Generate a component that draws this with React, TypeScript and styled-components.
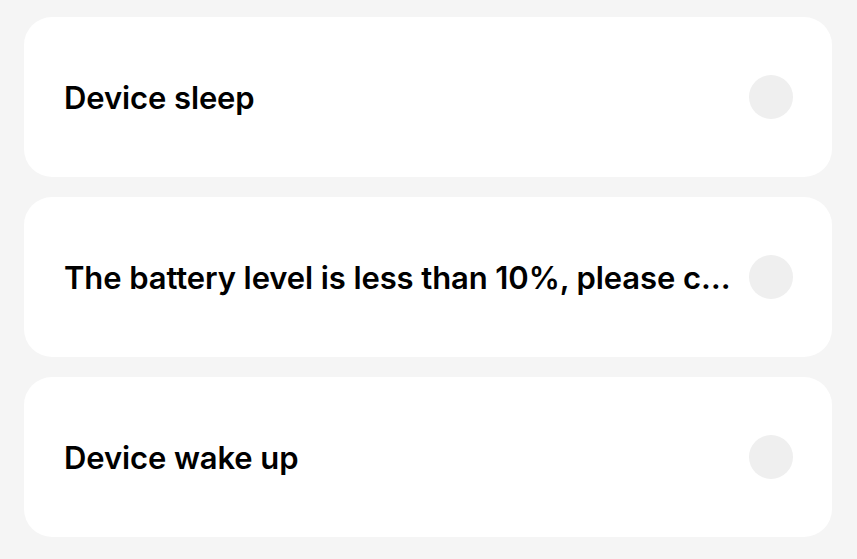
import React from "react";
import styled, { createGlobalStyle } from "styled-components";

const GlobalStyle = createGlobalStyle`
  html, body {
    margin: 0;
    padding: 0;
    background: #f5f5f5;
  }
  body {
    font-family: Inter, "Noto Sans", sans-serif;
  }
`;

const List = styled.div`
  display: flex;
  flex-direction: column;
  gap: 20px;
  padding: 17px 25px 0 24px;
`;

const Card = styled.div`
  display: flex;
  align-items: center;
  gap: 12px;
  height: 160px;
  padding: 0 39px 0 40px;
  background: #ffffff;
  border-radius: 28px;
  box-sizing: border-box;
`;

const Title = styled.span`
  flex: 1;
  min-width: 0;
  font-size: 31px;
  font-weight: 600;
  letter-spacing: -0.1px;
  color: #000;
  white-space: nowrap;
  overflow: hidden;
  text-overflow: ellipsis;
`;

const Dot = styled.div<{ $on?: boolean }>`
  flex: none;
  width: 44px;
  height: 44px;
  border-radius: 50%;
  background: ${(p) => (p.$on ? "#3478f6" : "#efefef")};
`;

const items = [
  "Device sleep",
  "The battery level is less than 10%, please charge the device in time",
  "Device wake up",
];

const App: React.FC = () => {
  return (
    <>
      <GlobalStyle />
      <List>
        {items.map((t) => (
          <Card key={t}>
            <Title>{t}</Title>
            <Dot />
          </Card>
        ))}
      </List>
    </>
  );
};

export default App;
